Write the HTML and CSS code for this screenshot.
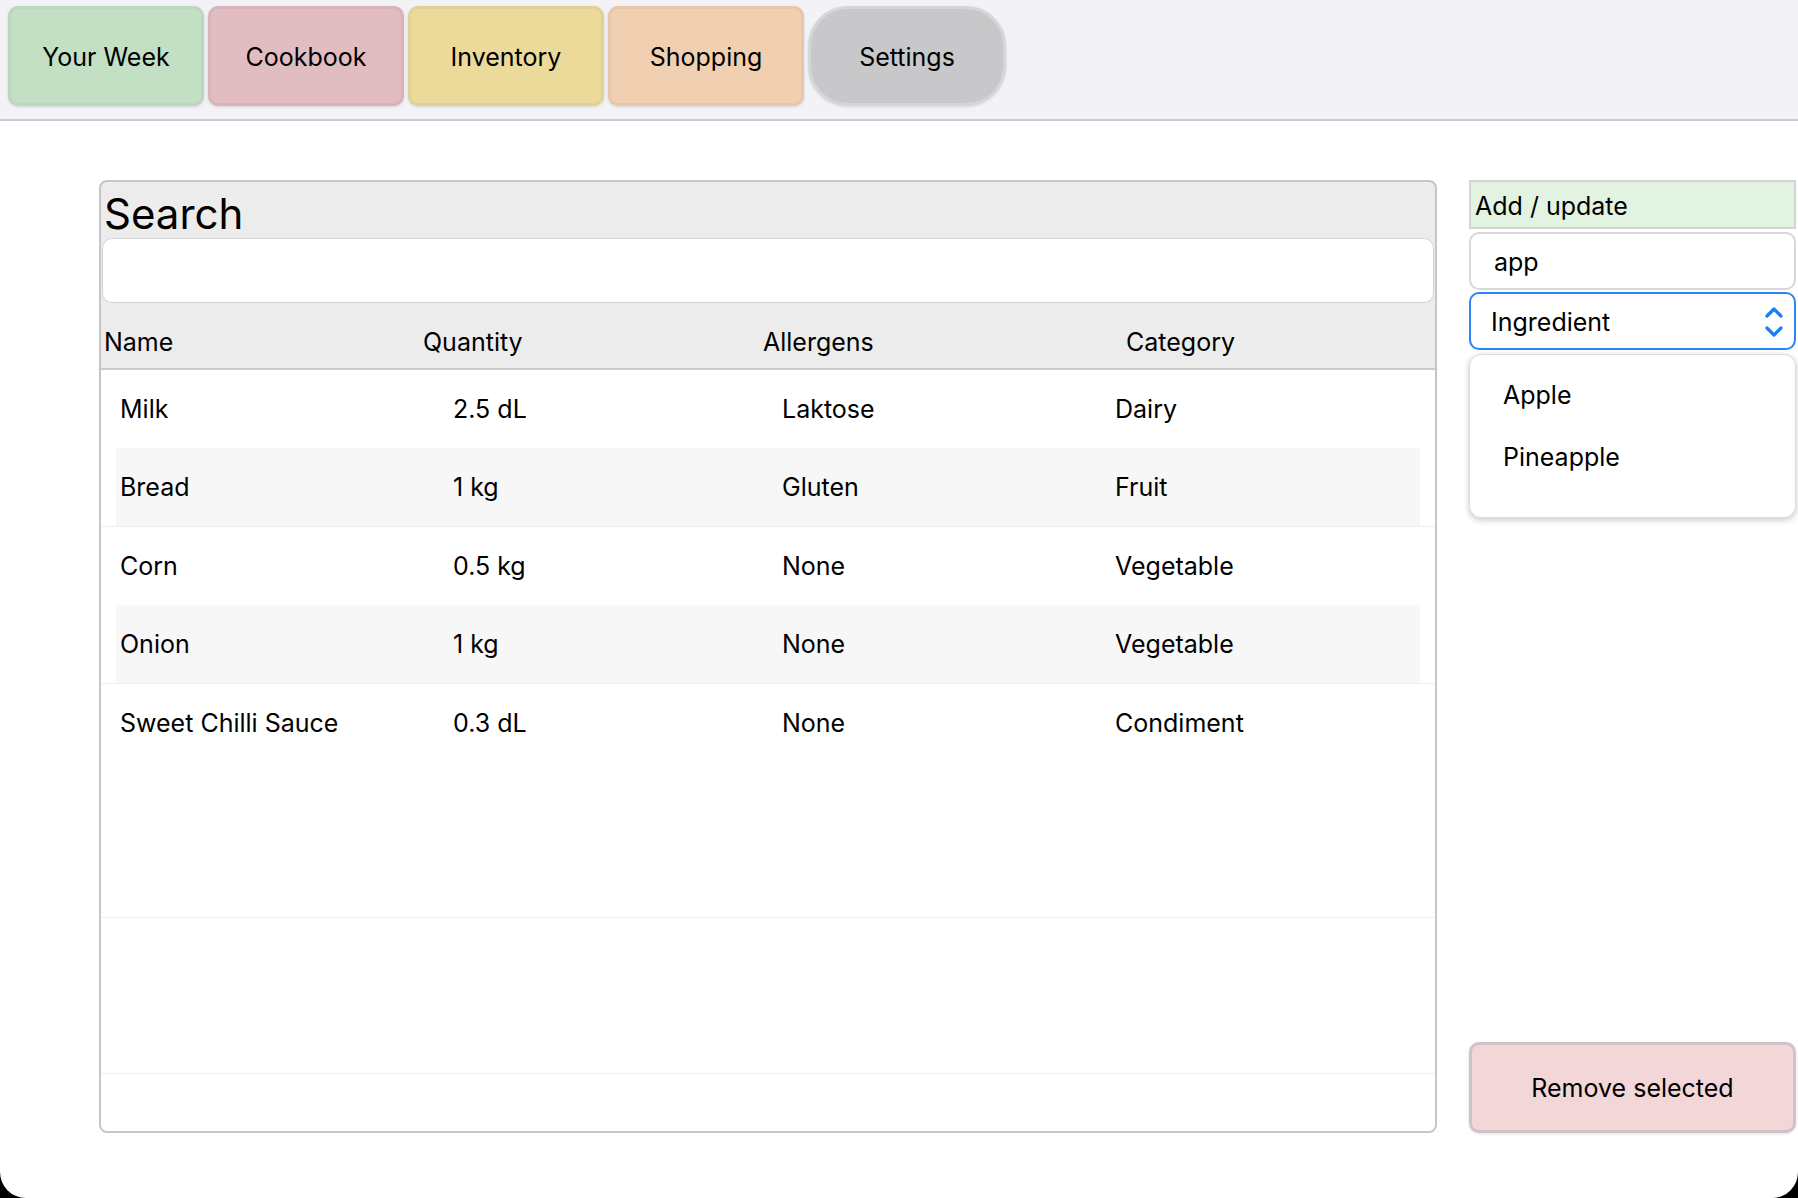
FILE: index.html
```html
<!DOCTYPE html>
<html lang="en">
<head>
<meta charset="utf-8">
<title>Inventory</title>
<link rel="stylesheet" href="styles.css">
</head>
<body>
<div class="screen">
  <nav class="nav">
    <button class="tab tab-week">Your Week</button>
    <button class="tab tab-cook">Cookbook</button>
    <button class="tab tab-inv">Inventory</button>
    <button class="tab tab-shop">Shopping</button>
    <button class="tab tab-set">Settings</button>
  </nav>
  <main class="main">
    <section class="panel">
      <div class="panel-title">Search</div>
      <div class="search-box"></div>
      <div class="thead">
        <div>Name</div>
        <div>Quantity</div>
        <div>Allergens</div>
        <div>Category</div>
      </div>
      <div class="tbody">
        <div class="row"><div>Milk</div><div>2.5 dL</div><div>Laktose</div><div>Dairy</div></div>
        <div class="row alt"><div>Bread</div><div>1 kg</div><div>Gluten</div><div>Fruit</div></div>
        <div class="sep"></div>
        <div class="row"><div>Corn</div><div>0.5 kg</div><div>None</div><div>Vegetable</div></div>
        <div class="row alt"><div>Onion</div><div>1 kg</div><div>None</div><div>Vegetable</div></div>
        <div class="sep"></div>
        <div class="row"><div>Sweet Chilli Sauce</div><div>0.3 dL</div><div>None</div><div>Condiment</div></div>
        <div class="filler"></div>
        <div class="sep"></div>
        <div class="filler"></div>
        <div class="sep"></div>
      </div>
    </section>
    <aside class="side">
      <div class="add-head">Add / update</div>
      <div class="field">app</div>
      <div class="select">
        <span>Ingredient</span>
        <svg class="chev" width="20" height="34" viewBox="0 0 20 34"><polyline points="3,11 10,4 17,11" fill="none" stroke="#1a7ef5" stroke-width="3.2" stroke-linecap="round" stroke-linejoin="round"/><polyline points="3,23 10,30 17,23" fill="none" stroke="#1a7ef5" stroke-width="3.2" stroke-linecap="round" stroke-linejoin="round"/></svg>
      </div>
      <div class="dropdown">
        <div class="opt">Apple</div>
        <div class="opt">Pineapple</div>
      </div>
      <button class="remove">Remove selected</button>
    </aside>
  </main>
</div>
</body>
</html>
```
FILE: styles.css
```css
html, body {
  margin: 0;
  padding: 0;
  background: #000;
}
body {
  font-family: Inter, "Liberation Sans", sans-serif;
  color: #000;
}
.screen {
  width: 1798px;
  height: 1198px;
  background: #fff;
  border-radius: 0 0 26px 26px;
  overflow: hidden;
  display: flex;
  flex-direction: column;
}
.nav {
  box-sizing: content-box;
  height: 113px;
  padding: 6px 8px 0 8px;
  background: #f2f2f7;
  border-bottom: 2px solid #c9c9ce;
  display: flex;
  gap: 4px;
  flex-shrink: 0;
}
.tab {
  width: 196px;
  height: 100px;
  box-sizing: border-box;
  border-radius: 10px;
  border: 3px solid rgba(0,0,0,0.04);
  font-family: inherit;
  font-size: 25px;
  color: #000;
  box-shadow: 0 1px 3px rgba(0,0,0,0.12);
  padding: 2px 0 0 0;
}
.tab-week { background: #c3e0c5; }
.tab-cook { background: #e1bcc1; }
.tab-inv { background: #ecda9b; }
.tab-shop { background: #f0d0b1; }
.tab-set { background: #c8c8ca; border-radius: 40px; border-color: #d6d6d8; width: 198px; }

.main {
  flex: 1;
  display: flex;
  gap: 32px;
  padding: 59px 2px 65px 99px;
  min-height: 0;
}
.panel {
  width: 1338px;
  box-sizing: border-box;
  border: 2px solid #c6c6c8;
  border-radius: 8px;
  background: #ececec;
  display: flex;
  flex-direction: column;
  overflow: hidden;
}
.panel-title {
  height: 56px;
  font-size: 42px;
  line-height: 64px;
  padding-left: 3px;
  overflow: hidden;
}
.search-box {
  height: 65px;
  box-sizing: border-box;
  margin: 0 1px;
  background: #fff;
  border: 1.5px solid #d2d2d4;
  border-radius: 10px;
}
.thead {
  height: 67px;
  box-sizing: border-box;
  padding: 12px 0 0 3px;
  display: grid;
  grid-template-columns: 319px 340px 363px 1fr;
  align-items: center;
  font-size: 25px;
  border-bottom: 2px solid #cacacd;
}
.tbody {
  flex: 1;
  background: #fff;
  display: flex;
  flex-direction: column;
}
.row {
  height: 78px;
  flex-shrink: 0;
  margin: 0 15px;
  padding-left: 4px;
  display: grid;
  grid-template-columns: 333px 329px 333px 1fr;
  align-items: center;
  font-size: 25px;
}
.row.alt { background: #f7f7f7; }
.sep {
  height: 1px;
  flex-shrink: 0;
  background: #efefef;
}
.filler {
  height: 155px;
  flex-shrink: 0;
}

.side {
  width: 327px;
  display: flex;
  flex-direction: column;
}
.add-head {
  height: 49px;
  box-sizing: border-box;
  border: 2px solid #d0d7d0;
  background: #e2f3e2;
  font-size: 25px;
  line-height: 49px;
  padding-left: 4px;
}
.field {
  margin-top: 3px;
  height: 58px;
  box-sizing: border-box;
  border: 2px solid #d8d8da;
  border-radius: 10px;
  background: #fff;
  font-size: 25px;
  line-height: 56px;
  padding-left: 23px;
}
.select {
  margin-top: 2px;
  height: 58px;
  box-sizing: border-box;
  border: 2px solid #2a85f5;
  border-radius: 10px;
  background: #fff;
  font-size: 25px;
  padding: 1px 10px 0 20px;
  display: flex;
  align-items: center;
  justify-content: space-between;
}
.dropdown {
  margin-top: 4px;
  height: 164px;
  box-sizing: border-box;
  border: 1px solid #dcdcde;
  border-radius: 12px;
  background: #fff;
  box-shadow: 0 2px 6px rgba(0,0,0,0.22);
  padding-top: 9px;
}
.opt {
  height: 62px;
  line-height: 62px;
  font-size: 25px;
  padding-left: 33px;
}
.remove {
  margin-top: auto;
  height: 91px;
  box-sizing: border-box;
  border: 3px solid #d0c3c4;
  border-radius: 10px;
  background: #f2d6d8;
  box-shadow: 0 1px 3px rgba(0,0,0,0.12);
  font-family: inherit;
  font-size: 25px;
  color: #000;
}
```
